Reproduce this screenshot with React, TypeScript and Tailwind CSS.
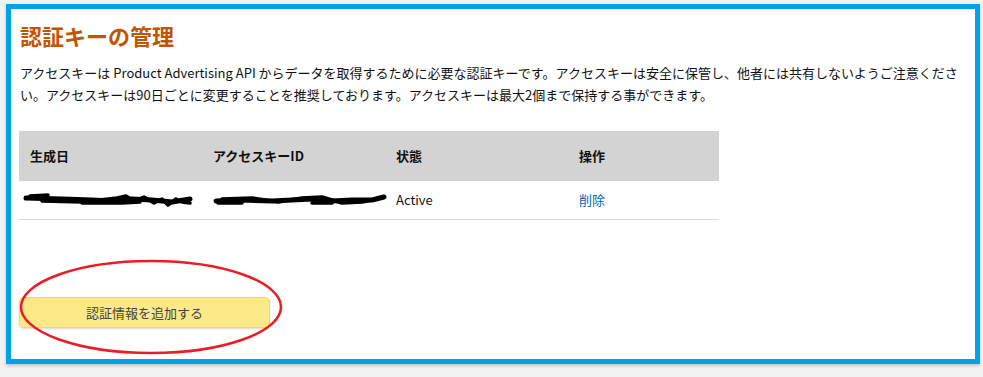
import type { ReactNode } from "react";

const FONT = "font-['Noto_Sans_CJK_JP','Noto_Sans',sans-serif]";

function Scribble({ width, paths }: { width: number; paths: string[] }) {
  return (
    <svg width={width} height={18} viewBox={`0 0 ${width} 18`} className="block">
      {paths.map((d, i) => (
        <path key={i} d={d} fill="none" stroke="#000" strokeWidth={i === 0 ? 5 : 3.5} strokeLinecap="round" strokeLinejoin="round" />
      ))}
    </svg>
  );
}

function HeaderCell({ children }: { children: ReactNode }) {
  return <div className="pl-[11px] text-[13px] font-bold text-[#111]">{children}</div>;
}

export default function App() {
  return (
    <div className={`min-h-[377px] bg-[#f2f2f2] pl-[6px] pt-[4px] ${FONT}`}>
      <div className="relative h-[360px] w-[974px] border-[5px] border-[#00a3e8] bg-white px-[8px] pt-[10px] shadow-[0_2px_3px_rgba(0,0,0,0.18)]">
        <h1 className="pl-[1px] text-[22px] leading-[32px] font-bold text-[#c45500]">認証キーの管理</h1>

        <p className="mt-[11px] pl-[1px] text-[13px] leading-[22px] text-[#111]">
          アクセスキーは Product Advertising API からデータを取得するために必要な認証キーです。アクセスキーは安全に保管し、他者には共有しないようご注意ください。アクセスキーは90日ごとに変更することを推奨しております。アクセスキーは最大2個まで保持する事ができます。
        </p>

        <div className="mt-[25px] w-[700px]">
          <div className="grid h-[50px] grid-cols-[183px_183px_183px_1fr] items-center bg-[#d3d3d3]">
            <HeaderCell>生成日</HeaderCell>
            <HeaderCell>アクセスキーID</HeaderCell>
            <HeaderCell>状態</HeaderCell>
            <HeaderCell>操作</HeaderCell>
          </div>
          <div className="grid h-[39px] grid-cols-[183px_183px_183px_1fr] items-center border-b border-[#ddd] text-[13px] text-[#111]">
            <div className="pl-[3px]">
              <Scribble
                width={172}
                paths={[
                  "M4 7 L40 8 L70 9 L90 10 L110 8 L130 9 L150 11 L168 8",
                  "M20 10 L60 11 L95 7 L104 5 L112 10 L122 6 L132 12 L140 8 L146 14 L154 8 L160 11 L168 12",
                  "M8 5 L26 4 M60 12 L100 12 L118 11",
                ]}
              />
            </div>
            <div className="pl-[10px]">
              <Scribble
                width={176}
                paths={[
                  "M4 10 L30 9 L60 10 L80 9 L100 8 L120 10 L140 9 L160 9 L172 6",
                  "M10 8 L40 7 L66 11 L90 7 L110 6 L130 12 L150 11 L165 8",
                  "M6 12 L30 12 M100 12 L120 12",
                ]}
              />
            </div>
            <div className="pl-[11px]">Active</div>
            <div className="pl-[11px] text-[#0066c0]">削除</div>
          </div>
        </div>

        <button className="mt-[77px] flex h-[31px] w-[251px] items-center justify-center rounded-[5px] border border-[#f2d668] bg-[#fde988] text-[13px] text-[#444] shadow-[0_1px_2px_rgba(0,0,0,0.15)]">
          認証情報を追加する
        </button>

        <svg className="absolute left-[7px] top-[250px]" width={266} height={96} viewBox="0 0 266 96">
          <ellipse cx={133} cy={48} rx={130} ry={46} fill="none" stroke="#ed1c24" strokeWidth={2.5} />
        </svg>
      </div>
    </div>
  );
}
